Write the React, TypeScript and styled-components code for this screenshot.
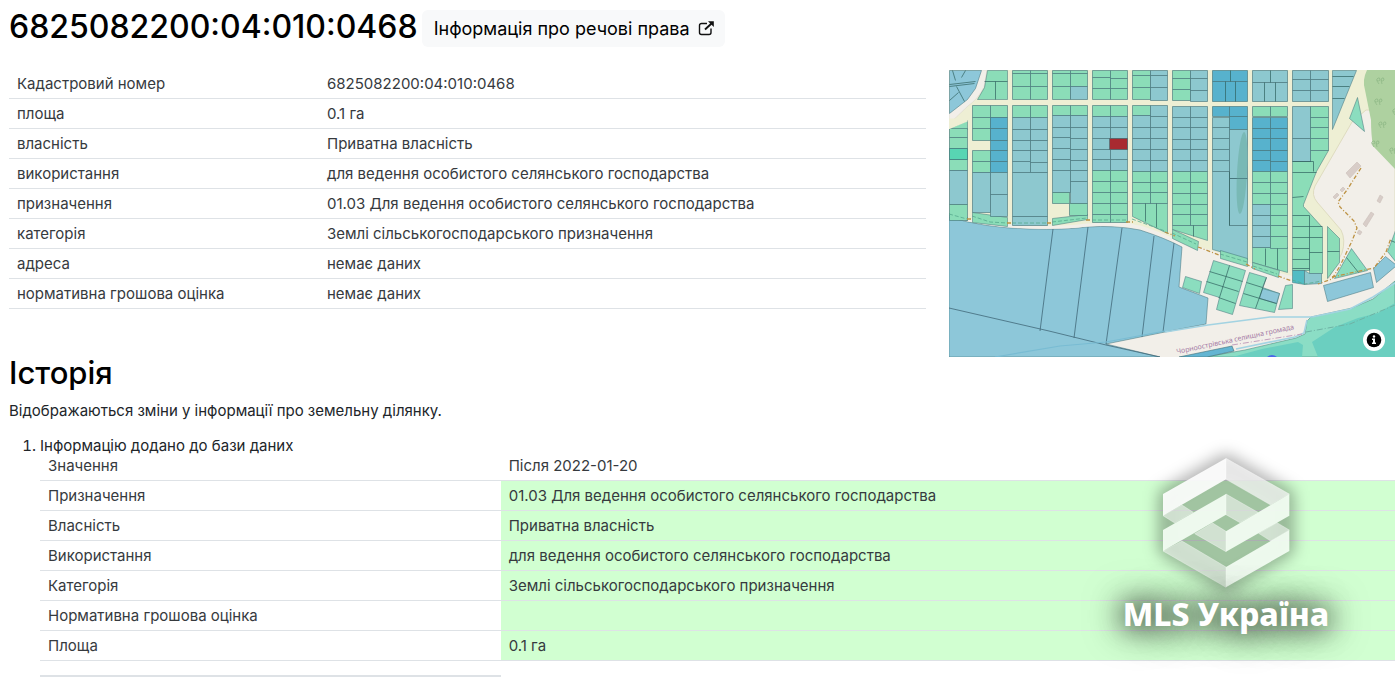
import React from "react";
import styled, { createGlobalStyle } from "styled-components";

const GlobalStyle = createGlobalStyle`
  *, *::before, *::after { box-sizing: border-box; }
  body {
    margin: 0;
    background: #fff;
    color: #212529;
    font-family: Inter, "Open Sans", sans-serif;
    font-size: 15px;
    line-height: 21px;
  }
`;

const Page = styled.main`
  position: relative;
  padding: 8px 5px 5px 9px;
`;

const Header = styled.header`
  display: flex;
  align-items: center;
  gap: 4px;
`;

const Title = styled.h1`
  margin: 0;
  padding-bottom: 2px;
  color: #000;
  font-size: 32px;
  font-weight: 500;
  line-height: 38px;
`;

const RightsLink = styled.a`
  display: inline-flex;
  align-items: center;
  gap: 8px;
  padding: 8px 10px 8px 12px;
  border-radius: 6px;
  background: #f8f9fa;
  color: #000;
  font-size: 18px;
  text-decoration: none;
`;

const Overview = styled.section`
  display: grid;
  grid-template-columns: 917fr 446fr;
  align-items: start;
  gap: 23px;
  margin-top: 21px;
`;

const DataTable = styled.table<{ $label: string }>`
  width: 100%;
  table-layout: fixed;
  border-collapse: separate;
  border-spacing: 0;
  color: #363a3e;

  th:first-child { width: ${(p) => p.$label}; }
`;

const HeadCell = styled.th`
  padding: 0 8px 4px;
  border-bottom: 1px solid #dee2e6;
  font-weight: 400;
  text-align: left;
`;

const Label = styled.th`
  padding: 4px 8px;
  border-bottom: 1px solid #dee2e6;
  font-weight: 400;
  text-align: left;
`;

const Value = styled.td<{ $added?: boolean }>`
  padding: 4px 8px;
  border-bottom: 1px solid #dee2e6;
  background: ${(p) => (p.$added ? "#d1ffd1" : "transparent")};
`;

const EndCell = styled.td`
  height: 16px;
  padding: 0;
  border-bottom: 2px solid #dee2e6;
`;

const MapBox = styled.figure`
  position: relative;
  margin: 1px 0 0;

  > svg { display: block; width: 100%; }
`;

const InfoButton = styled.button`
  position: absolute;
  right: 10px;
  bottom: 6px;
  display: grid;
  place-items: center;
  width: 22px;
  height: 22px;
  padding: 0;
  border: 0;
  border-radius: 50%;
  background: #fff;
`;

const HistoryTitle = styled.h2`
  margin: 0;
  color: #000;
  font-size: 31px;
  font-weight: 500;
  line-height: 32px;
`;

const Note = styled.p`
  margin: 11px 0 16px;
`;

const HistoryList = styled.ol`
  margin: 0;
  padding-left: 31px;
`;

const HistoryEntry = styled.li`
  line-height: 18px;

  table { line-height: 21px; }
`;

const Watermark = styled.div`
  position: absolute;
  top: 445px;
  right: 34px;
  display: flex;
  flex-direction: column;
  align-items: center;
  width: 280px;
  pointer-events: none;

  > svg { overflow: visible; }
`;

const Brand = styled.span`
  position: relative;
  margin-top: -12px;
  color: #fff;
  font-family: "Noto Sans", "Open Sans", sans-serif;
  font-size: 32px;
  font-weight: 800;
  line-height: 42px;
  white-space: nowrap;
  text-shadow: 0 0 24px rgba(0, 0, 0, 0.5), 0 2px 32px rgba(0, 0, 0, 0.7), 0 0 40px rgba(0, 0, 0, 0.5);
`;

const GREEN = "#8bddb8";
const BLUE = "#8dc8cf";
const FIELD = "#8dc7d9";
const DEEP = "#57b2cd";
const ROAD = "#eeefd4";
const LAND = "#f2efe9";
const LINE = "#3f6f76";

type Block = { x: number; w: number; ys: number[]; fill: string };

/* A vertical strip of plots, cut at every y of the list. */
const b = (x: number, w: number, fill: string, ...ys: number[]): Block => ({ x, w, fill, ys });

const blocks: Block[] = [
  b(949, 18, GREEN, 128, 137, 148, 159, 170),
  b(949, 18, "#58d5b3", 148, 159),
  b(949, 18, BLUE, 170, 204),
  b(949, 18, GREEN, 204, 220),
  b(972, 18, GREEN, 105, 117, 128, 140),
  b(972, 18, GREEN, 150, 161, 172),
  b(972, 18, BLUE, 172, 212),
  b(990, 17, GREEN, 105, 117),
  b(990, 17, DEEP, 117, 128, 140, 150, 161, 172),
  b(990, 17, BLUE, 172, 194, 216),
  b(1012, 18, GREEN, 70, 73, 86, 99),
  b(1030, 17, GREEN, 70, 73, 86, 99),
  b(1012, 18, GREEN, 105, 117),
  b(1030, 17, GREEN, 105, 117),
  b(1012, 18, BLUE, 117, 129, 140, 150, 161, 172),
  b(1030, 17, BLUE, 117, 129, 140, 150, 162, 172),
  b(1012, 35, BLUE, 172, 216, 225),
  b(1052, 18, GREEN, 70, 73, 86, 99),
  b(1070, 17, GREEN, 70, 73, 86),
  b(1070, 17, BLUE, 86, 99),
  b(1052, 18, GREEN, 105, 115),
  b(1070, 17, GREEN, 105, 115),
  b(1052, 18, BLUE, 115, 127, 137, 148, 159, 170, 192),
  b(1070, 17, BLUE, 115, 127, 138, 149, 160, 170, 181, 203),
  b(1052, 17, GREEN, 192, 203),
  b(1069, 18, GREEN, 203, 215),
  b(1092, 18, GREEN, 70, 77, 88, 99),
  b(1110, 17, GREEN, 70, 78, 88, 99),
  b(1092, 18, GREEN, 105, 116),
  b(1110, 17, GREEN, 105, 116),
  b(1092, 18, BLUE, 116, 127, 138, 149, 159, 170),
  b(1110, 17, BLUE, 116, 127, 138, 149, 159, 170),
  b(1092, 18, GREEN, 170, 181, 192, 203, 214, 222),
  b(1110, 17, GREEN, 170, 181, 192, 203, 214, 222),
  b(1109, 18, "#a82a30", 138, 149),
  b(1132, 18, GREEN, 70, 75, 87, 99),
  b(1150, 17, BLUE, 70, 75, 87, 100),
  b(1132, 18, GREEN, 105, 115),
  b(1150, 17, BLUE, 105, 116),
  b(1132, 18, BLUE, 115, 127, 138, 149, 160, 171),
  b(1150, 17, BLUE, 116, 127, 138, 149, 160, 171),
  b(1132, 18, GREEN, 171, 182, 192, 203),
  b(1150, 17, GREEN, 171, 182, 192, 203),
  b(1172, 18, GREEN, 70, 78, 89, 100),
  b(1190, 17, BLUE, 70, 78, 90, 101),
  b(1172, 18, BLUE, 106, 117, 127, 139, 149, 160, 171),
  b(1190, 17, BLUE, 106, 117, 127, 139, 149, 160, 171),
  b(1172, 18, GREEN, 171, 182, 193, 204, 214, 225),
  b(1190, 17, GREEN, 171, 182, 193, 204, 214, 225),
  b(1212, 35, DEEP, 70, 81, 101),
  b(1212, 17, DEEP, 106, 116),
  b(1229, 18, DEEP, 106, 116, 129),
  b(1212, 17, BLUE, 117, 127, 138, 149, 160, 171),
  b(1229, 18, BLUE, 129, 178, 225),
  b(1252, 35, BLUE, 70, 82, 101),
  b(1252, 18, GREEN, 106, 116),
  b(1270, 17, GREEN, 106, 116),
  b(1252, 18, DEEP, 117, 128, 138, 150, 160, 171),
  b(1270, 17, DEEP, 117, 128, 138, 150, 161, 171),
  b(1252, 18, GREEN, 171, 182, 193, 204),
  b(1252, 18, BLUE, 204, 215, 225, 236, 247),
  b(1270, 17, GREEN, 171, 182, 193, 204, 215, 225, 236, 248),
  b(1292, 18, BLUE, 70, 79, 90, 101),
  b(1310, 18, BLUE, 70, 79, 90, 101),
  b(1292, 18, BLUE, 106, 138, 161),
  b(1310, 18, GREEN, 106, 117, 127, 138, 150),
];

type Shape = [points: string, fill: string];

const underlay: Shape[] = [
  ["949,70 981,70 975,88 967,99 949,113", FIELD],
  ["987,70 1007,70 1007,99 977,99 984,87", GREEN],
  ["949,128 967,120 967,129 949,129", GREEN],
  ["1212,171 1229,171 1229,225 1247,225 1247,259 1212,249", BLUE],
  ["1332,70 1356,70 1332,129", BLUE],
  ["1357,97 1364,131 1349,118", "#8bddbf"],
  ["1132,203 1167,203 1167,233 1132,216", GREEN],
  ["972,212 1007,217 1007,226 972,222", GREEN],
  ["949,213 967,217 967,220 949,216", GREEN],
  ["1052,218 1087,214 1087,219 1052,225", GREEN],
  ["1172,225 1207,225 1207,240 1172,229", GREEN],
  ["1172,229 1198,241 1197,250 1172,238", GREEN],
  ["1220,250 1247,258 1247,266 1220,258", GREEN],
  ["1252,247 1287,247 1287,272 1252,262", GREEN],
  ["1252,262 1279,270 1278,277 1252,268", GREEN],
  ["1310,150 1328,150 1316,171 1303,204 1303,206 1322,227 1322,273 1309,273 1309,270 1292,270 1292,161 1310,161", GREEN],
  ["1292,270 1304,270 1304,284 1292,282", "#52bcc4"],
  ["1304,270 1309,273 1321,273 1321,283 1304,284", BLUE],
  ["1327,226 1339,238 1339,262 1327,278", GREEN],
  ["1351,248 1367,270 1334,278", "#8bddbf"],
  ["1395,230 1391,241 1387,251 1395,261", "#8bddbf"],
  ["1373,268 1385,256 1395,264 1395,266 1376,282", FIELD],
  ["1323,285 1370,272 1373,287 1327,301", FIELD],
  ["1213,260 1245,270 1232,314 1216,309 1219,297 1203,292", "#8bddbf"],
  ["1249,272 1266,277 1262,287 1279,293 1274,312 1239,305", "#8bddbf"],
  ["1262,288 1279,293 1276,303 1259,298", FIELD],
  ["1185,276 1201,281 1199,293 1182,287", "#8bddbf"],
  ["1285,285 1292,284 1292,308 1278,309", "#8bddbf"],
];

const cuts =
  "M949,84 975,81 M949,86 974,83 M956,86 964,101 M949,100 958,92 M961,77 965,70 M955,80 952,70" +
  "M984,81H1007 M995,81V99 M1230,70V81 M1225,81V101 M1235,81V101" +
  "M1270,70V82 M1264,82V101 M1275,82V101 M1332,76H1353 M1332,86H1349 M1332,98H1344" +
  "M1145,203V221 M1156,203V227 M1193,225V236 M1229,171V225 M1265,248V265 M1277,248V269" +
  "M1292,161H1313V171 M1292,172H1316 M1292,197 1303,196 M1292,215H1309 M1292,226H1322 M1292,237H1309 M1309,237H1322" +
  "M1292,248H1309 M1309,252H1322 M1292,259H1309 M1292,268H1309 M1309,215V270" +
  "M1327,251H1339 M1346,257 1358,272 M1390,240 1395,242" +
  "M1229,265 1219,297 M1209,271 1242,281 M1206,281 1238,291 M1218,297 1235,303" +
  "M1266,277 1255,308 M1246,282 1262,287 M1243,293 1276,303";

function CadastralMap() {
  return (
    <svg viewBox="949 70 446 287" role="img" aria-label="Карта земельних ділянок">
      <rect x="949" y="70" width="446" height="287" fill={ROAD} />
      <path
        d="M981,70H987L984,87Q978,99 968,106L949,124V113L967,98Q977,84 981,70Z"
        fill={LAND}
        stroke="#d9d5cc"
        strokeWidth="0.5"
      />
      <path
        d="M1366,110L1352,122L1315,186Q1311,195 1317,202L1341,230Q1346,240 1342,253L1328,280L1395,290V110Z"
        fill={LAND}
        stroke="#dfdcc0"
      />
      <path
        d="M949,216 972,223 1007,227 1050,228 1087,225 1127,222 1167,236 1207,249 1287,275 1325,281 1345,270 1395,262V357H949Z"
        fill={LAND}
      />
      <path
        d="M1367,70Q1362,80 1365,90L1371,120Q1371,135 1373,146L1395,169V70Z"
        fill="#aed1a0"
      />
      <g fill="none" stroke="#8fb987" strokeWidth="0.8">
        {[[1377, 80], [1375, 101], [1379, 124], [1372, 143], [1390, 150], [1393, 111]].map(([x, y]) => (
          <path key={`${x}-${y}`} d={`M${x},${y}q2,2 3,0q0,-3 -2,-2q-2,1 -1,3l2,3m2,-4q2,2 3,0q0,-3 -2,-2l-1,2l1,4`} />
        ))}
      </g>
      <path
        d="M949,217 Q985,228 1030,229 Q1065,230 1087,227 Q1115,225 1140,230 Q1165,238 1182,247L1179,287 1208,298 1206,324 1165,332 1106,344 1160,357H949Z"
        fill={FIELD}
        stroke={LINE}
        strokeWidth="0.5"
      />
      <path
        d="M949,215 Q985,226 1030,227 Q1065,228 1087,225 Q1115,223 1140,227 Q1165,235 1190,248"
        fill="none"
        stroke={LAND}
        strokeWidth="3"
      />
      <path
        d="M1053,229 1040,331M1088,227 1074,338M1122,228 1106,344M1154,236 1142,337M1174,243 1163,332M949,308 1049,331 1106,345 1160,357"
        fill="none"
        stroke="#416878"
        strokeWidth="0.8"
      />
      <g transform="translate(0.5 0.5)" strokeLinejoin="round">
        <g stroke={LINE} strokeWidth="0.5">
          {underlay.map(([points, fill]) => (
            <polygon key={points} points={points} fill={fill} />
          ))}
        </g>
        {blocks.map(({ x, w, ys, fill }) => (
          <g key={`${x}-${ys[0]}-${fill}`} fill={fill} stroke={LINE} strokeWidth="0.6">
            {ys.slice(1).map((y, i) => (
              <rect key={y} x={x} y={ys[i]} width={w} height={y - ys[i]} />
            ))}
          </g>
        ))}
        <path d="M948,118 967,118 967,121 948,129Z" fill={ROAD} />
        <path d={cuts} fill="none" stroke="#2f625f" strokeWidth="0.7" />
      </g>
      <ellipse cx="1242" cy="173" rx="5" ry="41" fill="#79b9b5" transform="rotate(3 1242 173)" />
      <path d="M1229,178.5H1247" stroke={LINE} strokeWidth="0.7" />

      <path
        d="M1311,317 1352,308 1373,299 1395,281V357H1205L1245,350 1296,338 1305,334 1307,321Z"
        fill="#8bddc5"
        stroke="#4f8f83"
        strokeWidth="0.6"
      />
      <path d="M1395,303 1378,313 1358,318 1335,327 1312,342 1318,357H1395Z" fill="#6bcfc0" />
      <path d="M1232,357 1262,349 1298,342 1303,345 1302,357Z" fill="#6bcfc0" />
      <path d="M1179,357 1232,346 1234,351 1207,357Z" fill="#63b5d2" stroke={LINE} strokeWidth="0.6" />
      <g fill="none" stroke="#a3d3e2" strokeWidth="1.6">
        <path d="M1165,332 1208,325 1270,317 1312,317 1350,309 1373,297 1395,283" />
        <path d="M1236,349 1295,337 1304,333 1307,320" />
      </g>
      <path d="M995,357 1060,346 1106,342 1165,331" fill="none" stroke="#79bcd3" strokeWidth="1.2" />
      <path d="M1232,345 1302,334" fill="none" stroke="#c3a0bd" strokeDasharray="6 2 1 2" />
      <path d="M1306,332 1350,324 1395,305" fill="none" stroke="#6eb3a5" strokeDasharray="6 2 1 2" />
      <path
        d="M949,214 967,219M972,216 990,222 1007,223M1012,223H1047M1052,222 1087,218M1092,220H1127M1132,219 1165,231M1172,233 1196,244M1220,254 1247,262M1253,266 1277,274M1292,280 1305,284 1322,281"
        fill="none"
        stroke="#57a98e"
        strokeWidth="0.8"
        strokeDasharray="4 2"
      />
      <g fill="none" stroke="#bd9243" strokeWidth="1.3" strokeDasharray="4 2 1 2">
        <path d="M1361,168 1347,190 1338,202 1340,207 1354,221 1357,228 1352,241 1340,266 1332,279 1318,284" />
        <path d="M1165,232 1175,236M1198,247 1219,255M1246,264 1255,269M1278,276 1292,281M1332,277 1374,268 1386,252 1391,238" />
        <path d="M967,219H972M1007,223H1013M1047,223H1053M1086,220H1092M1126,222H1133" />
      </g>
      <g fill="#d8cdc8" stroke="#c6bab5" strokeWidth="0.5">
        <polygon points="1346,173 1357,162 1361,166 1350,178" />
        <polygon points="1333,197 1337,193 1339,195 1335,199" />
        <polygon points="1340,190 1343,187 1345,189 1342,192" />
        <polygon points="1377,201 1380,195 1383,197 1380,203" />
        <polygon points="1363,224 1371,212 1374,214 1366,227" />
        <polygon points="1357,233 1359,230 1362,232 1360,235" />
      </g>
      <path d="M1267,357Q1272,353 1277,357Z" fill="#4a68e8" />
      <text
        transform="translate(1177 354) rotate(-12)"
        fill="#a57ba5"
        fontFamily="'Noto Sans', sans-serif"
        fontSize="7"
      >
        Чорноострівська селищна громада
      </text>
    </svg>
  );
}

function ExternalIcon() {
  return (
    <svg width="17" height="17" viewBox="0 0 17 17" fill="none" stroke="#111" strokeWidth="1.4" aria-hidden="true">
      <path d="M9 3.500H3.500a2 2 0 0 0-2 2v7a2 2 0 0 0 2 2h7.500a2 2 0 0 0 2-2V8.500" />
      <path d="M7 9.500 13.500 3.500" strokeWidth="1.9" />
      <path d="M10 1.200h5.800v5.800z" fill="#111" stroke="none" />
    </svg>
  );
}

function InfoIcon() {
  return (
    <svg width="16" height="16" viewBox="0 0 16 16" aria-hidden="true">
      <circle cx="8" cy="8" r="7.300" fill="#000" />
      <path d="M6 6.500h3v4h1V12H6v-1.500h1V8H6z" fill="#fff" />
      <circle cx="8" cy="4.500" r="1.200" fill="#fff" />
    </svg>
  );
}

function HexLogo() {
  return (
    <svg width="160" height="160" viewBox="167 45 480 480" aria-hidden="true">
      <defs>
        <filter id="soft" x="-40%" y="-40%" width="180%" height="180%">
          <feGaussianBlur stdDeviation="24" />
        </filter>
      </defs>
      <polygon
        points="407,85 597,192 597,363 407,472 218,363 218,192"
        fill="#000"
        fillOpacity="0.23"
        stroke="#000"
        strokeOpacity="0.32"
        strokeWidth="22"
        filter="url(#soft)"
      />
      <g fill="#f1f5f1" fillOpacity="0.6" stroke="#fff" strokeOpacity="0.5" strokeWidth="2">
        <polygon points="407,85 597,192 541,225 407,148" fill="#f6f6f6" fillOpacity="0.75" />
        <polygon points="218,257 275,225 309,247 253,279" />
        <polygon points="407,192 503,247 449,278 407,254" />
        <polygon points="367,279 407,304 407,365 313,311" />
        <polygon points="505,310 560,278 597,300 541,333" />
        <polygon points="218,363 275,333 407,411 407,472" />
      </g>
      <g fill="#f6fff6" fillOpacity="0.9">
        <polygon points="218,192 407,85 407,148 218,257" fill="#fff" />
        <polygon points="218,300 407,192 407,254 218,363" />
        <polygon points="597,192 597,257 407,365 407,304" />
        <polygon points="407,411 597,300 597,363 407,472" />
      </g>
    </svg>
  );
}

const details = [
  ["Кадастровий номер", "6825082200:04:010:0468"],
  ["площа", "0.1 га"],
  ["власність", "Приватна власність"],
  ["використання", "для ведення особистого селянського господарства"],
  ["призначення", "01.03 Для ведення особистого селянського господарства"],
  ["категорія", "Землі сільськогосподарського призначення"],
  ["адреса", "немає даних"],
  ["нормативна грошова оцінка", "немає даних"],
];

const changes = [
  ["Призначення", "01.03 Для ведення особистого селянського господарства"],
  ["Власність", "Приватна власність"],
  ["Використання", "для ведення особистого селянського господарства"],
  ["Категорія", "Землі сільськогосподарського призначення"],
  ["Нормативна грошова оцінка", ""],
  ["Площа", "0.1 га"],
];

export default function App() {
  return (
    <Page>
      <GlobalStyle />
      <Header>
        <Title>6825082200:04:010:0468</Title>
        <RightsLink href="#rights">
          Інформація про речові права
          <ExternalIcon />
        </RightsLink>
      </Header>

      <Overview>
        <DataTable $label="310px">
          <tbody>
            {details.map(([label, value]) => (
              <tr key={label}>
                <Label scope="row">{label}</Label>
                <Value>{value}</Value>
              </tr>
            ))}
          </tbody>
        </DataTable>
        <MapBox>
          <CadastralMap />
          <InfoButton type="button" aria-label="Інформація про карту">
            <InfoIcon />
          </InfoButton>
        </MapBox>
      </Overview>

      <section>
        <HistoryTitle>Історія</HistoryTitle>
        <Note>Відображаються зміни у інформації про земельну ділянку.</Note>
        <HistoryList>
          <HistoryEntry>
            Інформацію додано до бази даних
            <DataTable $label="34%">
              <thead>
                <tr>
                  <HeadCell scope="col">Значення</HeadCell>
                  <HeadCell scope="col">Після 2022-01-20</HeadCell>
                </tr>
              </thead>
              <tbody>
                {changes.map(([label, value]) => (
                  <tr key={label}>
                    <Label scope="row">{label}</Label>
                    <Value $added>{value}</Value>
                  </tr>
                ))}
                <tr>
                  <EndCell />
                </tr>
              </tbody>
            </DataTable>
          </HistoryEntry>
        </HistoryList>
      </section>

      <Watermark>
        <HexLogo />
        <Brand>MLS Україна</Brand>
      </Watermark>
    </Page>
  );
}
